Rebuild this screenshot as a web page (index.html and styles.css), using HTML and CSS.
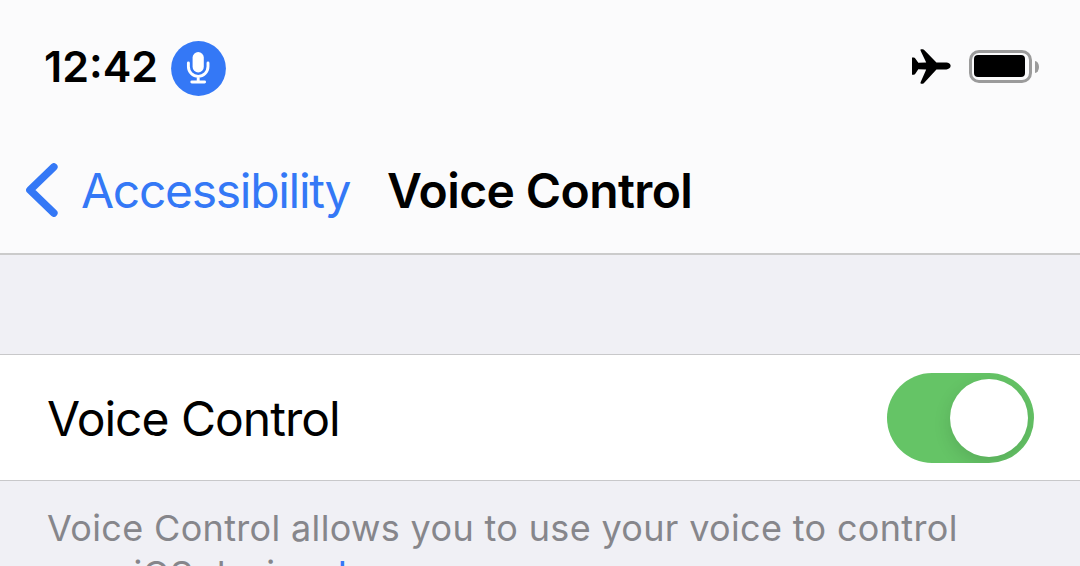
FILE: index.html
```html
<!DOCTYPE html>
<html lang="en">
  <head>
    <meta charset="UTF-8" />
    <meta name="viewport" content="width=device-width, initial-scale=1.0" />
    <title>Voice Control</title>
    <link rel="stylesheet" href="styles.css">
  </head>
  <body>
    <header class="header">
      <div class="status-bar">
        <span class="time">12:42</span>
        <svg class="mic" viewBox="0 0 55 55">
          <circle cx="27.5" cy="27.5" r="27.4" fill="#3478f6" />
          <rect x="21.6" y="11" width="11.2" height="20.4" rx="5.6" fill="#fff" />
          <path d="M17.4 22v3.6a9.8 9.8 0 0 0 19.6 0v-3.6M27.2 36v5M20.8 41h12.8" fill="none" stroke="#fff" stroke-width="2.9" stroke-linecap="round" />
        </svg>
        <div class="status-icons">
          <svg class="plane" viewBox="66 56 118 106">
            <path d="M66 82h5q3 0 5 3l9 13 24-1-17-36q-2-4 2-4h4q3 0 5 2l37 38h30c7 0 13 4 13 10s-6 11-13 11h-30l-37 40q-2 3-5 3h-4q-4 0-2-4l17-39-24-1-9 14q-2 3-5 3h-5z" />
          </svg>
          <div class="battery"><div class="battery-level"></div></div>
          <div class="battery-tip"></div>
        </div>
      </div>
      <nav class="nav-bar">
        <a class="back" href="#">
          <svg class="chevron" viewBox="0 0 32 54">
            <path d="M27.8 4L4 27L27.8 50" fill="none" stroke="#3478f6" stroke-width="7.6" stroke-linecap="round" stroke-linejoin="round" />
          </svg>
          <span class="back-label">Accessibility</span>
        </a>
        <h1 class="title">Voice Control</h1>
      </nav>
    </header>

    <main class="settings">
      <div class="row">
        <span class="row-label">Voice Control</span>
        <div class="toggle"><div class="knob"></div></div>
      </div>
      <p class="footnote">Voice Control allows you to use your voice to control<br><span class="second-line">your iOS device. <a class="link" href="#">Learn more...</a></span></p>
    </main>
  </body>
</html>
```

FILE: styles.css
```css
* {
  box-sizing: border-box;
}
body {
  margin: 0;
  height: 566px;
  overflow: hidden;
  background-color: #f0f0f5;
  color: #000;
  font-family: Inter, "Liberation Sans", sans-serif;
}
a {
  color: #3478f6;
  text-decoration: none;
}
svg {
  display: block;
  flex: none;
}

/* Header */
.header {
  height: 255px;
  background-color: #fbfbfc;
  border-bottom: 2px solid #cbcbcb;
}
.status-bar {
  display: flex;
  align-items: center;
  height: 137px;
  padding: 0 41px 0 44px;
}
.time {
  width: 127px;
  padding-bottom: 6px;
  font-size: 43px;
  font-weight: 600;
  white-space: nowrap;
}
.mic {
  width: 55px;
  height: 55px;
}
.status-icons {
  display: flex;
  align-items: center;
  margin-left: auto;
  padding-bottom: 4px;
}
.plane {
  width: 39px;
  height: 35px;
  margin-right: 18px;
}
.battery {
  width: 63px;
  height: 33px;
  padding: 2px;
  border: 3px solid #9b9b9b;
  border-radius: 10px;
}
.battery-level {
  width: 51px;
  height: 22px;
  background-color: #000;
  border-radius: 4px;
}
.battery-tip {
  width: 4px;
  height: 12px;
  margin-left: 3px;
  background-color: #9b9b9b;
  border-radius: 0 4px 4px 0 / 0 6px 6px 0;
}
.nav-bar {
  display: flex;
  align-items: center;
  height: 106px;
  padding-left: 26px;
}
.back {
  display: flex;
  align-items: center;
  width: 361px;
}
.chevron {
  width: 32px;
  height: 54px;
  margin-right: 23px;
}
.back-label {
  font-size: 48px;
  letter-spacing: -1.3px;
}
.title {
  margin: 0;
  font-size: 48px;
  font-weight: 600;
  letter-spacing: -0.6px;
  white-space: nowrap;
}

/* Settings list */
.settings {
  padding-top: 99px;
}
.row {
  display: flex;
  align-items: center;
  justify-content: space-between;
  height: 127px;
  padding: 0 46px 0 47px;
  background-color: #fff;
  border-top: 1px solid #c8c8ca;
  border-bottom: 1px solid #c8c8ca;
}
.row-label {
  padding-top: 2px;
  font-size: 48px;
  letter-spacing: -1px;
}
.toggle {
  display: flex;
  align-items: center;
  justify-content: flex-end;
  width: 147px;
  height: 90px;
  padding-right: 6px;
  background-color: #65c466;
  border-radius: 45px;
  overflow: hidden;
}
.knob {
  width: 78px;
  height: 78px;
  background-color: #fff;
  border-radius: 50%;
  box-shadow: 0 6px 18px rgba(0, 0, 0, 0.12);
}
.footnote {
  margin: 0;
  padding: 24px 0 0 47px;
  color: #86868b;
  font-size: 36px;
  line-height: 46px;
  letter-spacing: 0.34px;
  white-space: nowrap;
}
.second-line {
  letter-spacing: 0.1px;
}
```
